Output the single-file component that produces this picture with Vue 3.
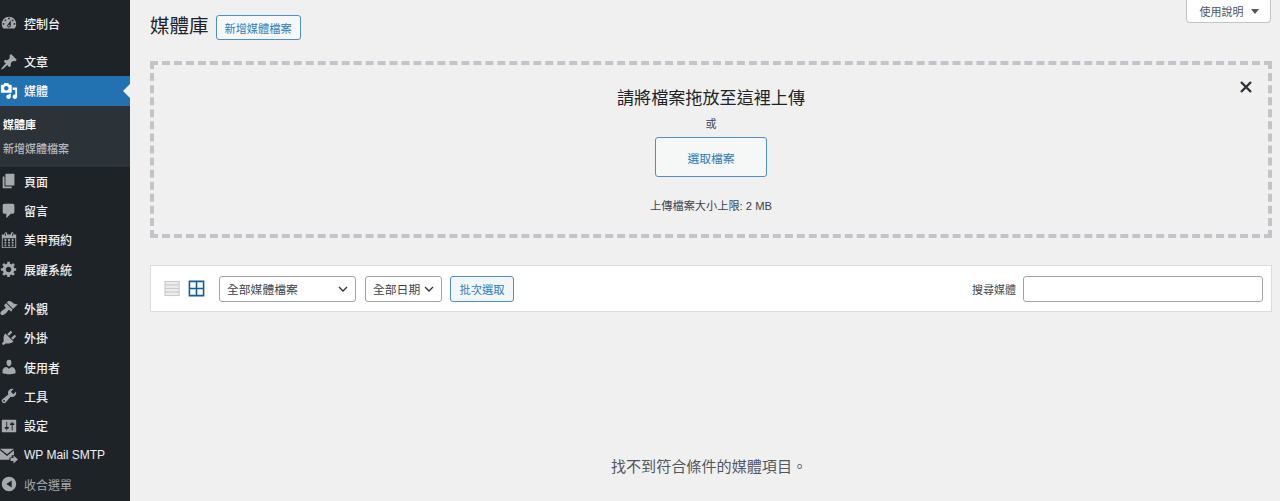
<script setup>
const icons = {
  dashboard: 'M3.76 16h12.48c1.1-1.37 1.76-3.11 1.76-5 0-4.42-3.58-8-8-8s-8 3.58-8 8c0 1.89.66 3.63 1.76 5zM10 4c.55 0 1 .45 1 1s-.45 1-1 1-1-.45-1-1 .45-1 1-1zM6 6c.55 0 1 .45 1 1s-.45 1-1 1-1-.45-1-1 .45-1 1-1zm8 0c.55 0 1 .45 1 1s-.45 1-1 1-1-.45-1-1 .45-1 1-1zm-5.37 5.55L12 7v6c0 1.1-.9 2-2 2s-2-.9-2-2c0-.57.24-1.08.63-1.45zM4 10c.55 0 1 .45 1 1s-.45 1-1 1-1-.45-1-1 .45-1 1-1zm12 0c.55 0 1 .45 1 1s-.45 1-1 1-1-.45-1-1 .45-1 1-1zm-5 3c0-.55-.45-1-1-1s-1 .45-1 1 .45 1 1 1 1-.45 1-1z',
  post: 'M10.44 3.02l1.82-1.82 6.36 6.35-1.83 1.82c-1.05-.68-2.48-.57-3.41.36l-.75.75c-.92.93-1.04 2.35-.35 3.41l-1.83 1.82-2.41-2.41-2.8 2.79c-.42.42-3.38 2.71-3.8 2.29s1.86-3.39 2.28-3.81l2.79-2.79L4.1 9.36l1.83-1.82c1.05.69 2.48.57 3.4-.36l.75-.75c.93-.92 1.05-2.35.36-3.41z',
  media: 'M13 11V4c0-.55-.45-1-1-1h-1.67L9 1H5L3.67 3H2c-.55 0-1 .45-1 1v7c0 .55.45 1 1 1h10c.55 0 1-.45 1-1zM7 4.5c1.38 0 2.5 1.12 2.5 2.5S8.38 9.5 7 9.5 4.5 8.38 4.5 7 5.62 4.5 7 4.5zM14 6h5v10.5c0 1.38-1.12 2.5-2.5 2.5S14 17.88 14 16.5s1.12-2.5 2.5-2.5c.17 0 .34.02.5.05V9h-3V6zm-4 8.05V13h2v3.5c0 1.38-1.12 2.5-2.5 2.5S7 17.88 7 16.5 8.12 14 9.5 14c.17 0 .34.02.5.05z',
  page: 'M6 15V2h10v13H6zm-1 1h8v2H3V5h2v11z',
  comment: 'M5 2h9c1.1 0 2 .9 2 2v7c0 1.1-.9 2-2 2h-2l-5 5v-5H5c-1.1 0-2-.9-2-2V4c0-1.1.9-2 2-2z',
  calendar: 'M15 4h3v15H2V4h3V3c0-.41.15-.76.44-1.06.29-.29.65-.44 1.06-.44s.77.15 1.06.44c.29.3.44.65.44 1.06v1h4V3c0-.41.15-.76.44-1.06.29-.29.65-.44 1.06-.44s.77.15 1.06.44c.29.3.44.65.44 1.06v1zM6 5.5c.28 0 .5-.22.5-.5V3c0-.28-.22-.5-.5-.5s-.5.22-.5.5v2c0 .28.22.5.5.5zm8 0c.28 0 .5-.22.5-.5V3c0-.28-.22-.5-.5-.5s-.5.22-.5.5v2c0 .28.22.5.5.5zM17 18V8H3v10h14zM7 9v2H5V9h2zm2 0h2v2H9V9zm4 2V9h2v2h-2zm-6 1v2H5v-2h2zm2 0h2v2H9v-2zm4 2v-2h2v2h-2zm-6 1v2H5v-2h2zm4 2H9v-2h2v2zm4 0h-2v-2h2v2z',
  gear: 'M18 12h-2.18c-.17.7-.44 1.35-.81 1.93l1.54 1.54-2.1 2.1-1.54-1.54c-.58.36-1.23.63-1.91.79V19H8v-2.18c-.68-.16-1.33-.43-1.91-.79l-1.54 1.54-2.12-2.12 1.54-1.54c-.36-.58-.63-1.23-.79-1.91H1V9.03h2.17c.16-.7.44-1.35.8-1.94L2.43 5.55l2.1-2.1 1.54 1.54c.58-.37 1.24-.64 1.93-.81V2h3v2.18c.68.16 1.33.43 1.91.79l1.54-1.54 2.12 2.12-1.54 1.54c.36.59.64 1.24.8 1.94H18V12zm-8.5 1.5c1.66 0 3-1.34 3-3s-1.34-3-3-3-3 1.34-3 3 1.34 3 3 3z',
  appearance: 'M14.48 11.06L7.41 3.99l1.5-1.5c.5-.56 2.3-.47 3.51.32 1.21.8 1.43 1.28 2.91 2.1 1.18.64 2.45 1.26 4.45.85zm-.71.71L6.7 4.7 4.93 6.47c-.39.39-.39 1.02 0 1.41l1.06 1.06c.39.39.39 1.03 0 1.42-.6.6-1.43 1.11-2.21 1.69-.35.26-.7.53-1.01.84C1.43 13.23.4 14.98.4 15.9c0 1.9 1.8 2.1 2.4 2.1.92 0 2.67-1.03 3.92-2.38.31-.31.58-.66.84-1.01.58-.78 1.09-1.61 1.69-2.21.39-.39 1.03-.39 1.42 0l1.06 1.06c.39.39 1.02.39 1.41 0z',
  plugin: 'M13.11 4.36L9.87 7.6 8 5.73l3.24-3.24c.35-.34 1.05-.2 1.56.32.52.51.66 1.21.31 1.55zm-8 1.77l.91-1.12 9.01 9.01-1.19.84c-.71.71-2.63 1.16-3.82 1.16H6.14L4.9 17.26c-.59.59-1.54.59-2.12 0-.59-.58-.59-1.53 0-2.12l1.24-1.24v-3.88c0-1.13.4-3.19 1.09-3.89zm7.26 3.97l3.24-3.24c.34-.35 1.04-.21 1.55.31.52.51.66 1.21.31 1.55l-3.24 3.25z',
  users: 'M10 9.25c-2.27 0-2.73-3.44-2.73-3.44C7 4.02 7.82 2 9.97 2c2.16 0 2.98 2.02 2.71 3.81 0 0-.41 3.44-2.68 3.44zm0 2.57L12.72 10c2.39 0 4.52 2.33 4.52 4.53v2.49s-3.65 1.13-7.24 1.13c-3.65 0-7.24-1.13-7.24-1.13v-2.49c0-2.25 1.94-4.48 4.47-4.48z',
  tools: 'M16.68 9.77c-1.34 1.34-3.3 1.67-4.95.99l-5.41 6.52c-.99.99-2.59.99-3.58 0s-.99-2.59 0-3.57l6.52-5.42c-.68-1.65-.35-3.61.99-4.95 1.28-1.28 3.12-1.62 4.72-1.06l-2.89 2.89 2.82 2.82 2.86-2.87c.53 1.58.18 3.39-1.08 4.65zM3.81 16.21c.4.39 1.04.39 1.43 0 .4-.4.4-1.04 0-1.43-.39-.4-1.03-.4-1.43 0-.39.39-.39 1.03 0 1.43z',
  settings: 'M18 16V4c0-.55-.45-1-1-1H3c-.55 0-1 .45-1 1v12c0 .55.45 1 1 1h14c.55 0 1-.45 1-1zM8 11h1c.55 0 1 .45 1 1s-.45 1-1 1H8v1.5c0 .28-.22.5-.5.5s-.5-.22-.5-.5V13H6c-.55 0-1-.45-1-1s.45-1 1-1h1V5.5c0-.28.22-.5.5-.5s.5.22.5.5V11zm5-2h-1c-.55 0-1-.45-1-1s.45-1 1-1h1V5.5c0-.28.22-.5.5-.5s.5.22.5.5V7h1c.55 0 1 .45 1 1s-.45 1-1 1h-1v5.5c0 .28-.22.5-.5.5s-.5-.22-.5-.5V9z',
  collapse: 'M18 10c0-4.42-3.58-8-8-8s-8 3.58-8 8 3.58 8 8 8 8-3.58 8-8zm-5-4v8l-6-4z',
}
const groupA = [{ icon: 'dashboard', label: '控制台' }]
const groupB = [{ icon: 'post', label: '文章' }]
const groupC = [
  { icon: 'page', label: '頁面' },
  { icon: 'comment', label: '留言' },
  { icon: 'calendar', label: '美甲預約' },
  { icon: 'gear', label: '展躍系統' },
]
const groupD = [
  { icon: 'appearance', label: '外觀' },
  { icon: 'plugin', label: '外掛' },
  { icon: 'users', label: '使用者' },
  { icon: 'tools', label: '工具' },
  { icon: 'settings', label: '設定' },
  { icon: 'mail', label: 'WP Mail SMTP' },
]
</script>

<template>
  <div class="page">
    <aside class="side">
      <div class="gap-a">
        <div v-for="m in groupA" :key="m.label" class="row">
          <svg class="ic" viewBox="0 0 20 20"><path :d="icons[m.icon]" fill-rule="evenodd" /></svg>
          <span>{{ m.label }}</span>
        </div>
      </div>
      <div class="gap-b">
        <div v-for="m in groupB" :key="m.label" class="row">
          <svg class="ic" viewBox="0 0 20 20"><path :d="icons[m.icon]" fill-rule="evenodd" /></svg>
          <span>{{ m.label }}</span>
        </div>
        <div class="row active">
          <svg class="ic" viewBox="0 0 20 20"><path :d="icons.media" fill-rule="evenodd" /></svg>
          <span>媒體</span>
          <i class="notch"></i>
        </div>
        <div class="sub">
          <div class="sub-on">媒體庫</div>
          <div class="sub-off">新增媒體檔案</div>
        </div>
        <div v-for="m in groupC" :key="m.label" class="row">
          <svg class="ic" viewBox="0 0 20 20"><path :d="icons[m.icon]" fill-rule="evenodd" /></svg>
          <span>{{ m.label }}</span>
        </div>
      </div>
      <div class="gap-c">
        <div v-for="m in groupD" :key="m.label" class="row">
          <svg v-if="m.icon !== 'mail'" class="ic" viewBox="0 0 20 20"><path :d="icons[m.icon]" fill-rule="evenodd" /></svg>
          <svg v-else class="ic" viewBox="0 0 20 20">
            <path d="M0 3h15.5L7.8 9.2 0 3zM0 4.8l7.8 6.2 7.7-6.2v5.4h-2.6v2.6h-2.4v2.4H0V4.8z" />
            <path d="M15 10.6L20 15l-5 4.4v-2.6h-3.2v-3.6H15v-2.6z" />
          </svg>
          <span>{{ m.label }}</span>
        </div>
        <div class="row muted">
          <svg class="ic" viewBox="0 0 20 20"><path :d="icons.collapse" fill-rule="evenodd" /></svg>
          <span>收合選單</span>
        </div>
      </div>
    </aside>

    <main class="main">
      <div class="help-wrap"><div class="help">使用說明<i class="caret"></i></div></div>
      <header class="head">
        <h1>媒體庫</h1>
        <a class="btn add">新增媒體檔案</a>
      </header>

      <section class="drop">
        <svg class="close" viewBox="0 0 14 14"><path d="M2 2l10 10M12 2L2 12" /></svg>
        <h2>請將檔案拖放至這裡上傳</h2>
        <p class="or">或</p>
        <a class="btn big">選取檔案</a>
        <p class="limit">上傳檔案大小上限: 2 MB</p>
      </section>

      <section class="bar">
        <svg class="view" viewBox="0 0 18 18">
          <rect x="1" y="1.5" width="15" height="15" fill="#ececed" stroke="#c3c4c7" />
          <path d="M1 5.2h15M1 8.9h15M1 12.7h15" stroke="#c3c4c7" fill="none" />
        </svg>
        <svg class="view grid" viewBox="0 0 18 18">
          <path d="M1.5 1.5h15v15h-15zM9 1.5v15M1.5 9h15" fill="none" stroke="#135e96" stroke-width="1.7" />
        </svg>
        <div class="sel type">全部媒體檔案
          <svg class="chev" viewBox="0 0 10 6"><path d="M1 1l4 4 4-4" /></svg>
        </div>
        <div class="sel date">全部日期
          <svg class="chev" viewBox="0 0 10 6"><path d="M1 1l4 4 4-4" /></svg>
        </div>
        <a class="btn bulk">批次選取</a>
        <label class="search-label">搜尋媒體</label>
        <div class="search"></div>
      </section>

      <p class="empty">找不到符合條件的媒體項目。</p>
    </main>
  </div>
</template>

<style>
html, body { margin: 0; background: #f0f0f1; overflow: hidden; }
</style>

<style scoped>
.page {
  display: flex;
  width: 1280px;
  height: 501px;
  overflow: hidden;
  background: #f0f0f1;
  font-family: "Liberation Sans", "Noto Sans CJK TC", sans-serif;
  color: #3c434a;
}
.side {
  width: 130px;
  flex: none;
  background: #1d2327;
  color: #f0f0f1;
  font-size: 12px;
  font-weight: 500;
}
.gap-a { padding-top: 8.5px; }
.gap-b { padding-top: 9.2px; }
.gap-c { padding-top: 10px; }
.row {
  position: relative;
  display: flex;
  align-items: center;
  height: 29.3px;
  white-space: nowrap;
}
.ic {
  flex: none;
  width: 18px;
  height: 18px;
  margin: 0 6px 0 0;
  fill: #a7aaad;
}
.active { background: #2271b1; color: #fff; }
.active .ic { fill: #fff; }
.muted { color: #a7aaad; font-size: 12px; font-weight: 400; }
.notch {
  position: absolute;
  right: 0;
  top: 50%;
  margin-top: -7px;
  border: 7px solid transparent;
  border-right-color: #f0f0f1;
  border-left-width: 0;
}
.sub {
  height: 61px;
  box-sizing: border-box;
  padding: 8px 0 0 3px;
  background: #2c3338;
  font-size: 11px;
}
.sub-on { height: 24px; line-height: 22px; color: #fff; font-weight: 700; }
.sub-off { height: 24px; line-height: 22px; color: #b4b9be; }

.main { position: relative; flex: 1; padding: 0 8px 0 20px; min-width: 0; }
.help-wrap { position: absolute; top: 0; right: 9px; }
.help {
  display: flex;
  align-items: center;
  justify-content: center;
  box-sizing: border-box;
  width: 85px;
  height: 23px;
  padding-left: 1px;
  background: #fff;
  border: 1px solid #c3c4c7;
  border-top: 0;
  border-radius: 0 0 4px 4px;
  font-size: 11px;
  color: #50575e;
}
.caret {
  margin-left: 7px;
  border: 4px solid transparent;
  border-top: 5px solid #50575e;
  border-bottom: 0;
}
.head { display: flex; align-items: flex-start; height: 61px; box-sizing: border-box; }
h1 { margin: 13px 7px 0 0; font-size: 19.5px; font-weight: 400; color: #1d2327; line-height: 27px; }
.btn {
  display: flex;
  align-items: center;
  justify-content: center;
  box-sizing: border-box;
  border: 1px solid #4f90c4;
  border-radius: 3px;
  background: #f6f7f7;
  color: #2f7ab6;
}
.add { width: 85px; height: 25px; margin-top: 15px; font-size: 11.2px; }
.drop {
  position: relative;
  box-sizing: border-box;
  width: 1122px;
  height: 177px;
  border: 4px dashed #c3c4c7;
  display: flex;
  flex-direction: column;
  align-items: center;
}
.close {
  position: absolute;
  top: 15px;
  right: 15px;
  width: 14px;
  height: 14px;
  fill: none;
  stroke: #2c3338;
  stroke-width: 2.4;
}
h2 { margin: 22px 0 0; font-size: 17.1px; font-weight: 400; line-height: 24px; color: #1d2327; }
.or { margin: 5px 0 0; font-size: 11px; line-height: 16px; color: #3c434a; }
.big { margin-top: 5px; width: 112px; height: 40px; font-size: 11.8px; }
.limit { margin: 21px 0 0; font-size: 11.2px; line-height: 16px; color: #3c434a; }
.bar {
  display: flex;
  align-items: center;
  box-sizing: border-box;
  width: 1122px;
  height: 47px;
  margin-top: 27px;
  padding: 0 8px 0 13px;
  background: #fff;
  border: 1px solid #dcdcde;
}
.view { flex: none; width: 17px; height: 17px; }
.grid { margin-left: 7px; }
.sel {
  display: flex;
  align-items: center;
  justify-content: space-between;
  box-sizing: border-box;
  height: 26px;
  padding: 0 7px;
  background: #fff;
  border: 1px solid #a0a3a8;
  border-radius: 3px;
  font-size: 11.8px;
  color: #3c434a;
}
.type { width: 137px; margin-left: 14px; }
.date { width: 77px; margin-left: 9px; }
.chev { width: 10px; height: 6px; fill: none; stroke: #2c3338; stroke-width: 1.3; }
.bulk { width: 64px; height: 26px; margin-left: 8px; font-size: 11.3px; background: #f3f6f8; }
.search-label { margin-left: auto; font-size: 11px; color: #3c434a; }
.search {
  box-sizing: border-box;
  width: 240px;
  height: 26px;
  margin-left: 7px;
  background: #fff;
  border: 1px solid #a0a3a8;
  border-radius: 3px;
}
.empty { margin: 144px 0 0; width: 1118px; text-align: center; font-size: 15.1px; line-height: 22px; color: #50575e; }
</style>
